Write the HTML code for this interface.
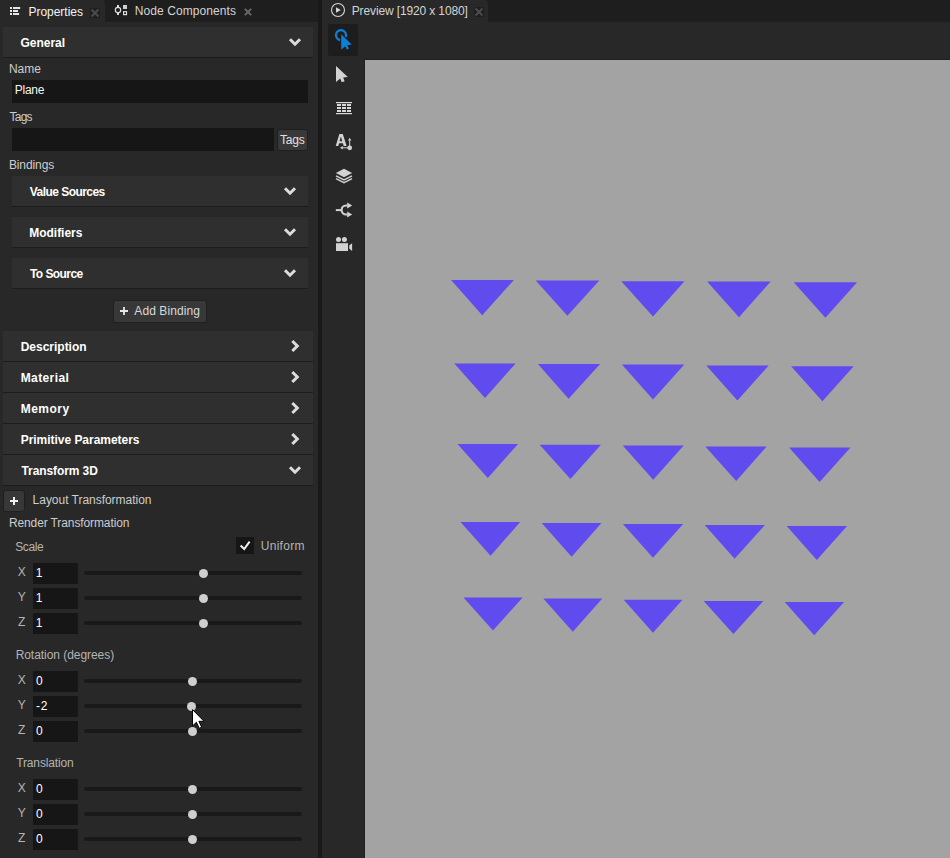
<!DOCTYPE html>
<html lang="en"><head><meta charset="utf-8"><title>Kanzi Studio - Properties / Preview</title>
<style>
html,body{margin:0;padding:0}
body{width:950px;height:858px;overflow:hidden;position:relative;background:#282828;font-family:"Liberation Sans", sans-serif;font-size:12px;color:#ddd}
.a,.t{position:absolute}
.t{white-space:pre;line-height:16px;height:16px}
.b{font-weight:700}
.hdr{position:absolute;left:3px;width:310px;height:30px;background:#2f2f2f;border-bottom:1px solid #1c1c1c}
.sub{position:absolute;left:12px;width:296px;height:30px;background:#2f2f2f;border-bottom:1px solid #1c1c1c}
.inp{position:absolute;background:#161616}
.btn{position:absolute;background:#383838;border:1px solid #1f1f1f;border-radius:3px;box-sizing:border-box}
.trk{position:absolute;left:84px;width:218px;height:4px;border-radius:2px;background:#191919}
.knb{position:absolute;width:9.4px;height:9.4px;border-radius:50%;background:#cfcfcf}
svg{position:absolute;left:0;top:0;overflow:visible}
</style></head>
<body>
<div class="a" style="left:0;top:0;width:318px;height:22px;background:#1e1e1e"></div>
<div class="a" style="left:0;top:0;width:105px;height:22px;background:#282828;border-radius:0 3px 0 0"></div>
<div class="a" style="left:318px;top:0;width:4px;height:858px;background:#191919"></div>
<div class="a" style="left:322px;top:0;width:628px;height:22px;background:#1e1e1e"></div>
<div class="a" style="left:322px;top:0;width:166px;height:22px;background:#282828;border-radius:0 3px 0 0"></div>
<div class="a" style="left:328px;top:24px;width:30px;height:32px;background:#1d1d1d;border-radius:3px"></div>
<div class="a" style="left:364px;top:59px;width:586px;height:799px;background:#202020"></div>
<div class="a" style="left:365px;top:60px;width:585px;height:798px;background:#a3a3a3"></div>
<div class="a" style="left:90px;top:8px;width:10px;height:10px;background:#1f1f1f"></div>
<div class="a" style="left:474px;top:7px;width:10px;height:10px;background:#1f1f1f"></div>
<div class="hdr" style="top:27px"></div>
<div class="sub" style="top:176px"></div>
<div class="sub" style="top:217px"></div>
<div class="sub" style="top:258px"></div>
<div class="hdr" style="top:331px"></div>
<div class="hdr" style="top:362px"></div>
<div class="hdr" style="top:393px"></div>
<div class="hdr" style="top:424px"></div>
<div class="hdr" style="top:455px"></div>
<div class="inp" style="left:12px;top:80px;width:296px;height:23px"></div>
<div class="inp" style="left:12px;top:128px;width:262px;height:23px"></div>
<div class="btn" style="left:277px;top:128.5px;width:31px;height:22.5px"></div>
<div class="btn" style="left:113px;top:300px;width:94px;height:23px"></div>
<div class="btn" style="left:3px;top:490px;width:22px;height:22px"></div>
<div class="inp" style="left:236px;top:537px;width:18px;height:17px"></div>
<div class="inp" style="left:33px;top:563px;width:45px;height:21px"></div><div class="trk" style="top:571px"></div><div class="knb" style="left:198.9px;top:568.8px"></div>
<div class="inp" style="left:33px;top:588px;width:45px;height:21px"></div><div class="trk" style="top:596px"></div><div class="knb" style="left:198.9px;top:593.8px"></div>
<div class="inp" style="left:33px;top:613px;width:45px;height:21px"></div><div class="trk" style="top:621px"></div><div class="knb" style="left:198.9px;top:618.8px"></div>
<div class="inp" style="left:33px;top:671px;width:45px;height:21px"></div><div class="trk" style="top:679px"></div><div class="knb" style="left:187.9px;top:676.8px"></div>
<div class="inp" style="left:33px;top:696px;width:45px;height:21px"></div><div class="trk" style="top:704px"></div><div class="knb" style="left:186.9px;top:701.8px"></div>
<div class="inp" style="left:33px;top:721px;width:45px;height:21px"></div><div class="trk" style="top:729px"></div><div class="knb" style="left:187.9px;top:726.8px"></div>
<div class="inp" style="left:33px;top:779px;width:45px;height:21px"></div><div class="trk" style="top:787px"></div><div class="knb" style="left:187.9px;top:784.8px"></div>
<div class="inp" style="left:33px;top:804px;width:45px;height:21px"></div><div class="trk" style="top:812px"></div><div class="knb" style="left:187.9px;top:809.8px"></div>
<div class="inp" style="left:33px;top:829px;width:45px;height:21px"></div><div class="trk" style="top:837px"></div><div class="knb" style="left:187.9px;top:834.8px"></div>
<span class="t" style="left:28.53px;top:3.84px;color:#f4f4f4;letter-spacing:-0.034px">Properties</span>
<span class="t" style="left:134.74px;top:3.24px;color:#d4d4d4;letter-spacing:0.081px">Node Components</span>
<span class="t" style="left:351.74px;top:3.44px;color:#d4d4d4;letter-spacing:-0.132px">Preview [1920 x 1080]</span>
<span class="t b" style="left:20.57px;top:34.84px;color:#ffffff;letter-spacing:-0.040px">General</span>
<span class="t" style="left:8.89px;top:60.84px;color:#cdcdcd;letter-spacing:0.027px">Name</span>
<span class="t" style="left:14.79px;top:81.84px;color:#f4f4f4;letter-spacing:-0.274px">Plane</span>
<span class="t" style="left:9.62px;top:108.84px;color:#cdcdcd;letter-spacing:-0.800px">Tags</span>
<span class="t" style="left:280.00px;top:131.84px;color:#e2e2e2;letter-spacing:-0.200px">Tags</span>
<span class="t" style="left:8.89px;top:156.84px;color:#cdcdcd;letter-spacing:-0.089px">Bindings</span>
<span class="t b" style="left:29.82px;top:183.84px;color:#ffffff;letter-spacing:-0.549px">Value Sources</span>
<span class="t b" style="left:29.31px;top:224.84px;color:#ffffff;letter-spacing:-0.032px">Modifiers</span>
<span class="t b" style="left:30.00px;top:265.84px;color:#ffffff;letter-spacing:-0.572px">To Source</span>
<span class="t" style="left:134.29px;top:302.84px;color:#d8d8d8;letter-spacing:0.098px">Add Binding</span>
<span class="t b" style="left:20.72px;top:338.84px;color:#ffffff;letter-spacing:-0.015px">Description</span>
<span class="t b" style="left:20.72px;top:369.84px;color:#ffffff;letter-spacing:0.388px">Material</span>
<span class="t b" style="left:20.72px;top:400.84px;color:#ffffff;letter-spacing:0.467px">Memory</span>
<span class="t b" style="left:20.72px;top:431.84px;color:#ffffff;letter-spacing:-0.035px">Primitive Parameters</span>
<span class="t b" style="left:21.49px;top:462.84px;color:#ffffff;letter-spacing:-0.091px">Transform 3D</span>
<span class="t" style="left:32.62px;top:491.84px;color:#cdcdcd;letter-spacing:-0.028px">Layout Transformation</span>
<span class="t" style="left:8.89px;top:514.84px;color:#cdcdcd;letter-spacing:-0.108px">Render Transformation</span>
<span class="t" style="left:15.26px;top:538.84px;color:#b4b4b4;letter-spacing:-0.422px">Scale</span>
<span class="t" style="left:260.70px;top:537.84px;color:#b4b4b4;letter-spacing:0.309px">Uniform</span>
<span class="t" style="left:15.63px;top:646.84px;color:#b4b4b4;letter-spacing:-0.048px">Rotation (degrees)</span>
<span class="t" style="left:16.28px;top:754.84px;color:#b4b4b4;letter-spacing:-0.152px">Translation</span>
<span class="t" style="left:17.80px;top:563.84px;color:#b4b4b4;letter-spacing:0.000px">X</span>
<span class="t" style="left:35.72px;top:564.84px;color:#ffffff;letter-spacing:0.000px">1</span>
<span class="t" style="left:17.82px;top:588.84px;color:#b4b4b4;letter-spacing:0.000px">Y</span>
<span class="t" style="left:35.72px;top:589.84px;color:#ffffff;letter-spacing:0.000px">1</span>
<span class="t" style="left:18.11px;top:613.84px;color:#b4b4b4;letter-spacing:0.000px">Z</span>
<span class="t" style="left:35.72px;top:614.84px;color:#ffffff;letter-spacing:0.000px">1</span>
<span class="t" style="left:17.80px;top:671.84px;color:#b4b4b4;letter-spacing:0.000px">X</span>
<span class="t" style="left:35.89px;top:672.84px;color:#ffffff;letter-spacing:0.000px">0</span>
<span class="t" style="left:17.82px;top:696.84px;color:#b4b4b4;letter-spacing:0.000px">Y</span>
<span class="t" style="left:36.06px;top:697.84px;color:#ffffff;letter-spacing:0.800px">-2</span>
<span class="t" style="left:18.11px;top:721.84px;color:#b4b4b4;letter-spacing:0.000px">Z</span>
<span class="t" style="left:35.89px;top:722.84px;color:#ffffff;letter-spacing:0.000px">0</span>
<span class="t" style="left:17.80px;top:779.84px;color:#b4b4b4;letter-spacing:0.000px">X</span>
<span class="t" style="left:35.89px;top:780.84px;color:#ffffff;letter-spacing:0.000px">0</span>
<span class="t" style="left:17.82px;top:804.84px;color:#b4b4b4;letter-spacing:0.000px">Y</span>
<span class="t" style="left:35.89px;top:805.84px;color:#ffffff;letter-spacing:0.000px">0</span>
<span class="t" style="left:18.11px;top:829.84px;color:#b4b4b4;letter-spacing:0.000px">Z</span>
<span class="t" style="left:35.89px;top:830.84px;color:#ffffff;letter-spacing:0.000px">0</span>
<svg width="950" height="858" viewBox="0 0 950 858">
<!-- properties tab icon -->
<g fill="#e6e6e6">
<rect x="10" y="7" width="2" height="2"/><rect x="13" y="7" width="7.2" height="2"/>
<rect x="10" y="10" width="2" height="2"/><rect x="13" y="10" width="5" height="2"/>
<rect x="10" y="13" width="2" height="2"/><rect x="13" y="13" width="6.1" height="2"/>
</g>
<!-- tab close crosses -->
<path d="M91.5 9.5l7 7M98.5 9.5l-7 7" stroke="#4b4b4b" stroke-width="2" fill="none"/>
<path d="M244.8 8.8l6.4 6.4M251.2 8.8l-6.4 6.4" stroke="#6a6a6a" stroke-width="1.9" fill="none"/>
<path d="M475.5 8.5l7 7M482.5 8.5l-7 7" stroke="#4b4b4b" stroke-width="2" fill="none"/>
<!-- node components tab icon -->
<g fill="#e0e0e0">
<rect x="117" y="5" width="2" height="2.4"/><rect x="117" y="12.6" width="2" height="2.4"/>
<rect x="123" y="5" width="4" height="4" fill="#cfcfcf"/>
</g>
<circle cx="118" cy="10" r="2.7" fill="none" stroke="#e0e0e0" stroke-width="1.15"/>
<rect x="123.6" y="11.7" width="2.9" height="2.9" fill="#0c0c0c" stroke="#e0e0e0" stroke-width="1.2"/>
<!-- preview tab icon -->
<circle cx="338" cy="10" r="6.5" fill="none" stroke="#d6d6d6" stroke-width="1.1"/>
<path d="M336 7.2v5.6l4.8-2.8z" fill="#d6d6d6"/>
<!-- chevrons down -->
<g fill="none" stroke="#dcdcdc" stroke-width="3">
<path d="M290 39.2l5 5 5-5"/>
<path d="M285 188.2l5 5 5-5"/>
<path d="M285 229.2l5 5 5-5"/>
<path d="M285 270.2l5 5 5-5"/>
<path d="M290 467.2l5 5 5-5"/>
<!-- chevrons right -->
<path d="M292.3 341l5 5-5 5"/>
<path d="M292.3 372l5 5-5 5"/>
<path d="M292.3 403l5 5-5 5"/>
<path d="M292.3 434l5 5-5 5"/>
</g>
<!-- plus icons -->
<path d="M124 307v8M120 311h8" stroke="#e8e8e8" stroke-width="1.8" fill="none"/>
<path d="M14 497v8M10 501h8" stroke="#f0f0f0" stroke-width="2" fill="none"/>
<!-- check mark -->
<path d="M240.6 545.6l3.6 3.4 5.4-7.4" stroke="#f2f2f2" stroke-width="2" fill="none"/>
<!-- toolbar: interact (selected) -->
<path d="M340.12 40.17A5.05 5.05 0 1 1 345.75 36.93" fill="none" stroke="#0d80d6" stroke-width="2.2"/>
<path d="M341.2 34.3l10.5 10.3-4.4 0.6 1.7 3.4-2.2 0.9-1.6-3.2-4 3.5z" fill="#0d80d6"/>
<!-- toolbar: select arrow -->
<path d="M336 66l11.8 11-4.6 0.4 1.4 4-3 0.6-1.4-3.5-4.2 3.5z" fill="#d2d2d2"/>
<!-- toolbar: grid -->
<g fill="#d8d8d8">
<rect x="336" y="102" width="16" height="1.2"/><rect x="336" y="113" width="16" height="1.2"/>
<rect x="337" y="104" width="4" height="2"/><rect x="342" y="104" width="4" height="2"/><rect x="347" y="104" width="4" height="2"/>
<rect x="337" y="107" width="4" height="2"/><rect x="342" y="107" width="4" height="2"/><rect x="347" y="107" width="4" height="2"/>
<rect x="337" y="110" width="4" height="2"/><rect x="342" y="110" width="4" height="2"/><rect x="347" y="110" width="4" height="2"/>
</g>
<!-- toolbar: A + transform -->
<g fill="#d2d2d2">
<path d="M339.4 134h3.4l3.8 12h-2.9l-0.8-2.8h-3.8l-0.8 2.8h-2.6zM340.9 136.6l-1.3 4.6h2.7z" fill-rule="evenodd"/>
<circle cx="349.7" cy="147.8" r="2.4"/>
<rect x="349.2" y="140" width="1" height="6"/>
<path d="M349.7 137.8l1.7 2.8h-3.4z"/>
<rect x="342" y="147.3" width="6" height="1"/>
<path d="M340 147.8l2.8-1.7v3.4z"/>
</g>
<!-- toolbar: layers -->
<path d="M344 168.8l8.2 4.2-8.2 4.2-8.2-4.2z" fill="#d2d2d2"/>
<path d="M336 175.9l8 4 8-4M336 178.7l8 4 8-4" fill="none" stroke="#d2d2d2" stroke-width="1.5"/>
<!-- toolbar: split arrows -->
<g fill="#d2d2d2">
<rect x="335.8" y="209.1" width="5.6" height="2"/>
<path d="M347.2 202.6v5.8l5-2.9zM347.2 211.6v5.8l5-2.9z"/>
</g>
<path d="M347.6 205.5h-1.5a4.5 4.5 0 0 0 0 9h1.5" fill="none" stroke="#d2d2d2" stroke-width="2.1"/>
<!-- toolbar: camera -->
<g fill="#d2d2d2">
<circle cx="338.5" cy="239.4" r="2.5"/><circle cx="344.4" cy="239.4" r="2.5"/>
<rect x="336" y="243.2" width="12" height="7.8"/>
<path d="M349.2 245.6l2.9-2.4v7.8l-2.9-2.4z"/>
</g>
<g fill="#604bee">
<polygon points="451.1,280.0 513.9,280.0 482.2,315.2"/>
<polygon points="535.7,280.4 599.3,280.4 567.4,315.8"/>
<polygon points="621.3,281.2 684.5,281.2 653.0,316.6"/>
<polygon points="707.1,281.6 770.7,281.6 739.0,317.2"/>
<polygon points="793.7,282.2 857.1,282.2 825.4,317.8"/>
<polygon points="454.3,363.4 515.7,363.4 485.0,398.1"/>
<polygon points="537.9,364.0 600.1,364.0 568.6,398.8"/>
<polygon points="621.9,364.6 684.3,364.6 653.0,399.4"/>
<polygon points="706.3,365.4 768.7,365.4 737.4,400.4"/>
<polygon points="791.1,366.2 853.7,366.2 822.4,401.2"/>
<polygon points="457.5,444.0 518.1,444.0 487.8,478.1"/>
<polygon points="539.7,444.8 600.9,444.8 570.4,479.1"/>
<polygon points="622.7,445.6 683.7,445.6 653.2,479.8"/>
<polygon points="705.3,446.4 766.7,446.4 736.2,481.1"/>
<polygon points="789.1,447.4 850.5,447.4 819.6,482.1"/>
<polygon points="460.5,522.1 520.1,522.1 490.6,555.7"/>
<polygon points="541.7,523.1 601.5,523.1 571.6,556.7"/>
<polygon points="622.9,524.0 683.1,524.0 653.0,557.7"/>
<polygon points="704.7,525.0 764.9,525.0 734.6,558.7"/>
<polygon points="786.7,526.1 847.1,526.1 816.8,559.9"/>
<polygon points="463.5,597.4 522.7,597.4 493.0,630.5"/>
<polygon points="543.3,598.4 602.3,598.4 572.8,631.7"/>
<polygon points="623.7,599.8 682.5,599.8 653.0,632.7"/>
<polygon points="703.7,601.0 763.3,601.0 733.4,634.1"/>
<polygon points="784.7,602.1 844.1,602.1 814.2,635.2"/>
</g>
<path d="M192.5 709.6v16.3l3.9-3.6 2.8 6 2.5-1.1-2.8-5.9h5.1z" fill="#fff" stroke="#000" stroke-width="1" stroke-linejoin="miter"/>
</svg>
</body></html>
